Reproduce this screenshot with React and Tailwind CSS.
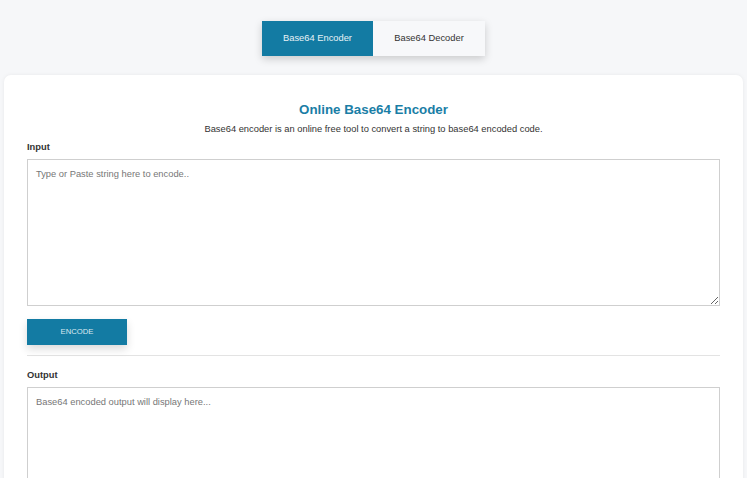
export default function App() {
  return (
    <div className="bg-[#f6f7f9] pt-[21px] overflow-hidden h-[478px]" style={{ fontFamily: '"Liberation Sans", Arial, sans-serif' }}>
      <div className="flex justify-center">
        <div className="flex shadow-[0_3px_8px_rgba(0,0,0,0.18)]">
          <div className="w-[111px] h-[35px] bg-[#137ba3] text-[#e8f2f6] text-[9.33px] flex items-center justify-center">Base64 Encoder</div>
          <div className="w-[112px] h-[35px] bg-[#f7f8fa] text-[#333] text-[9.33px] flex items-center justify-center">Base64 Decoder</div>
        </div>
      </div>
      <div className="mx-[4px] mt-[19px] bg-white rounded-[7px] shadow-[0_0_4px_rgba(0,0,0,0.06)] px-[23px] pt-[27px] pb-4">
        <h1 className="text-center text-[13.33px] font-bold text-[#1a7ea6] leading-[16px]">Online Base64 Encoder</h1>
        <p className="text-center text-[9.33px] text-[#333] mt-[6px] leading-[11px]">Base64 encoder is an online free tool to convert a string to base64 encoded code.</p>
        <div className="text-[9.33px] font-bold text-[#333] mt-[7px] leading-[11px]">Input</div>
        <textarea
          className="block w-full h-[147px] mt-[6px] border border-[#cfcfcf] px-[8px] pt-[8px] pb-[10px] text-[9.33px] text-[#333] placeholder:text-[#777] outline-none resize-y"
          placeholder="Type or Paste string here to encode.."
        />
        <button className="mt-[13px] w-[100px] h-[26px] bg-[#137ba3] text-[#dbe9f0] text-[7.7px] uppercase shadow-[0_4px_8px_rgba(0,0,0,0.15)]">Encode</button>
        <div className="border-t border-[#e3e3e3] mt-[10px]" />
        <div className="text-[9.33px] font-bold text-[#333] mt-[14px] leading-[11px]">Output</div>
        <textarea
          className="block w-full h-[147px] mt-[6px] border border-[#cfcfcf] px-[8px] pt-[8px] pb-[10px] text-[9.33px] text-[#333] placeholder:text-[#777] outline-none resize-y"
          placeholder="Base64 encoded output will display here..."
        />
      </div>
    </div>
  );
}
